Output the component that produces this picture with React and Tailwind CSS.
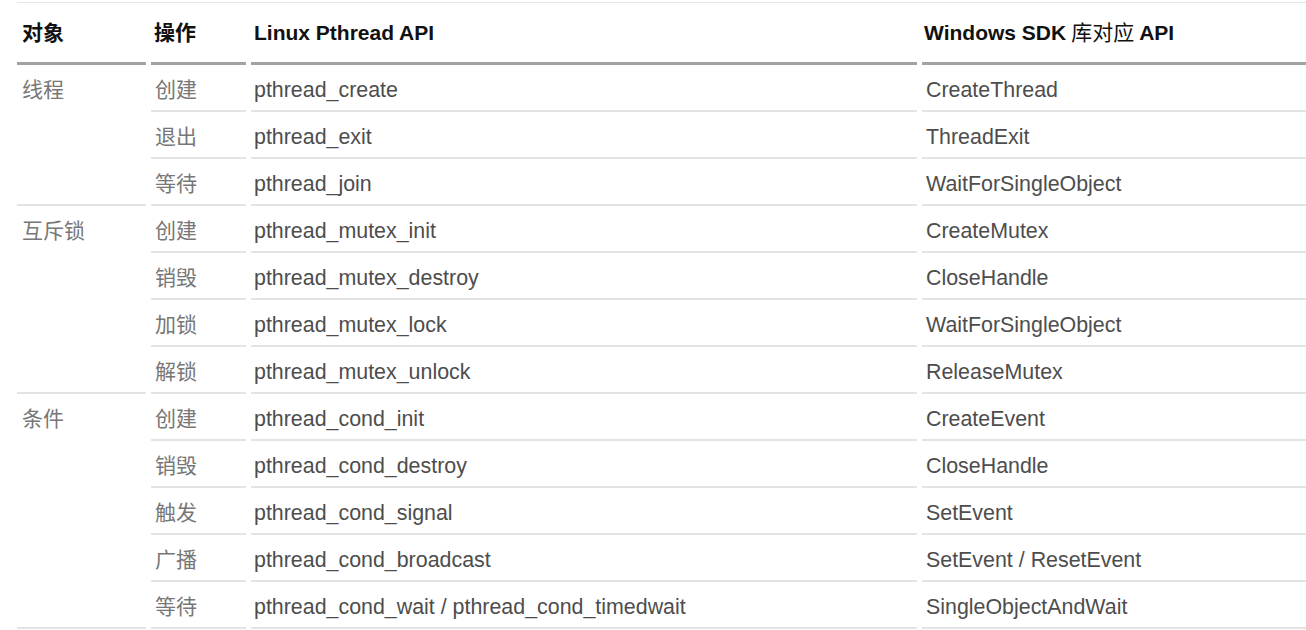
import { Fragment } from 'react';

const groups = [
  {
    name: '线程',
    rows: [
      ['创建', 'pthread_create', 'CreateThread'],
      ['退出', 'pthread_exit', 'ThreadExit'],
      ['等待', 'pthread_join', 'WaitForSingleObject'],
    ],
  },
  {
    name: '互斥锁',
    rows: [
      ['创建', 'pthread_mutex_init', 'CreateMutex'],
      ['销毁', 'pthread_mutex_destroy', 'CloseHandle'],
      ['加锁', 'pthread_mutex_lock', 'WaitForSingleObject'],
      ['解锁', 'pthread_mutex_unlock', 'ReleaseMutex'],
    ],
  },
  {
    name: '条件',
    rows: [
      ['创建', 'pthread_cond_init', 'CreateEvent'],
      ['销毁', 'pthread_cond_destroy', 'CloseHandle'],
      ['触发', 'pthread_cond_signal', 'SetEvent'],
      ['广播', 'pthread_cond_broadcast', 'SetEvent / ResetEvent'],
      ['等待', 'pthread_cond_wait / pthread_cond_timedwait', 'SingleObjectAndWait'],
    ],
  },
];

const spanClass = { 3: 'row-span-3', 4: 'row-span-4', 5: 'row-span-5' };

const Head = ({ children, pad }) => (
  <div className={`h-[62px] flex items-center border-b-[3px] border-[#a2a2a2] text-[#111] font-bold ${pad}`}>
    {children}
  </div>
);

const Cell = ({ children, className }) => (
  <div className={`h-[47px] flex items-center pt-[4px] border-b-2 border-[#e4e4e4] ${className}`}>
    {children}
  </div>
);

export default function App() {
  return (
    <div className="w-[1306px] h-[630px] overflow-hidden bg-white font-['Liberation_Sans','Noto_Sans_CJK_SC',sans-serif] text-[21px] leading-[24px]">
      <div className="ml-[17px] mt-[2px] w-[1310px] border-t border-[#e6e6e6] grid grid-cols-[129px_95px_666px_400px] gap-x-[5px]">
        {/* header */}
        <Head pad="pl-[5px]">对象</Head>
        <Head pad="pl-[3px]">操作</Head>
        <Head pad="pl-[3px]">Linux Pthread API</Head>
        <Head pad="pl-[2px]">
          Windows SDK <span className="font-normal mx-[5px]">库对应</span> API
        </Head>

        {/* body */}
        {groups.map((g) => (
          <Fragment key={g.name}>
            <div className={`${spanClass[g.rows.length]} border-b-2 border-[#e4e4e4] text-[#777] pl-[5px]`}>
              <div className="h-[45px] flex items-center pt-[4px]">{g.name}</div>
            </div>
            {g.rows.map(([op, linux, win], i) => (
              <Fragment key={i}>
                <Cell className="pl-[4px] text-[#777]">{op}</Cell>
                <Cell className="pl-[3px] text-[#4d4d4d] text-[21.4px]">{linux}</Cell>
                <Cell className="pl-[4px] text-[#4d4d4d] text-[21.4px]">{win}</Cell>
              </Fragment>
            ))}
          </Fragment>
        ))}
      </div>
    </div>
  );
}
